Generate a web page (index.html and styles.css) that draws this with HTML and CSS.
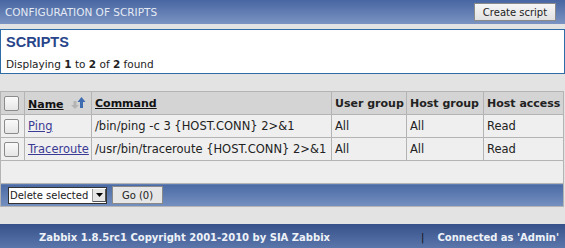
FILE: index.html
```html
<!DOCTYPE html>
<html lang="en">
<head>
  <meta charset="UTF-8">
  <title>Configuration of scripts</title>
  <link rel="stylesheet" href="styles.css">
</head>
<body>
  <!-- Page title bar -->
  <div class="page-header">
    <span class="page-title">CONFIGURATION OF SCRIPTS</span>
    <button class="btn create-btn">Create script</button>
  </div>

  <!-- Scripts summary box -->
  <div class="summary-box">
    <h2>SCRIPTS</h2>
    <p>Displaying <b>1</b> to <b>2</b> of <b>2</b> found</p>
  </div>

  <!-- Scripts list -->
  <table class="list-table">
    <colgroup>
      <col class="w-check">
      <col class="w-name">
      <col class="w-command">
      <col class="w-usergroup">
      <col class="w-hostgroup">
      <col>
    </colgroup>
    <thead>
      <tr>
        <th class="col-check"><span class="checkbox"></span></th>
        <th>
          <a class="sort-link" href="#">Name</a>
          <svg class="sort-icon" width="17" height="13" viewBox="0 0 17 13">
            <path d="M3.5 5h3v4h2.5L5 13 1 9h2.5z" fill="#b4b4b4"/>
            <path d="M10 12h3V6h2.5L11.5 1 7.5 6H10z" fill="#3f6bb0"/>
          </svg>
        </th>
        <th><a class="sort-link" href="#">Command</a></th>
        <th>User group</th>
        <th>Host group</th>
        <th>Host access</th>
      </tr>
    </thead>
    <tbody>
      <tr>
        <td class="col-check"><span class="checkbox"></span></td>
        <td><a href="#">Ping</a></td>
        <td>/bin/ping -c 3 {HOST.CONN} 2&gt;&amp;1</td>
        <td>All</td>
        <td>All</td>
        <td>Read</td>
      </tr>
      <tr>
        <td class="col-check"><span class="checkbox"></span></td>
        <td><a href="#">Traceroute</a></td>
        <td>/usr/bin/traceroute {HOST.CONN} 2&gt;&amp;1</td>
        <td>All</td>
        <td>All</td>
        <td>Read</td>
      </tr>
      <tr class="empty-row">
        <td colspan="6"></td>
      </tr>
    </tbody>
    <tfoot>
      <tr>
        <td colspan="6">
          <div class="actions">
            <div class="select-box">
              <span>Delete selected</span>
              <span class="select-arrow">
                <svg width="7" height="4" viewBox="0 0 7 4"><path d="M0 0h7L3.5 4z" fill="#000"/></svg>
              </span>
            </div>
            <button class="btn go-btn">Go (0)</button>
          </div>
        </td>
      </tr>
    </tfoot>
  </table>

  <!-- Page footer -->
  <div class="page-footer">
    <span class="copyright">Zabbix 1.8.5rc1 Copyright 2001-2010 by SIA Zabbix</span>
    <span class="divider">|</span>
    <span class="connected">Connected as 'Admin'</span>
  </div>
</body>
</html>
```

FILE: styles.css
```css
body {
  margin: 0;
  font-family: "DejaVu Sans", Verdana, sans-serif;
  font-size: 11.5px;
  color: #222;
  background-color: #e3e3e3;
}

.page-header {
  display: flex;
  justify-content: space-between;
  align-items: center;
  height: 24px;
  padding: 0 9px 0 5px;
  background: linear-gradient(to bottom, #4866a2, #7a93c2);
}

.page-title {
  color: #e4eaf4;
  font-size: 10.5px;
}

.btn {
  font-family: "DejaVu Sans", Verdana, sans-serif;
  font-size: 10px;
  color: #222;
  background: linear-gradient(to bottom, #f6f6f6, #e2e2e2);
  border: 1px solid #8a8a8a;
  padding: 0;
  height: 18px;
  white-space: nowrap;
}

.create-btn {
  width: 82px;
}

.summary-box {
  margin-top: 5px;
  height: 43px;
  background-color: #fff;
  border: 1px solid #2e6ca8;
  padding: 0 5px;
}

.summary-box h2 {
  margin: 4px 0 0;
  height: 18px;
  font-family: "Liberation Sans", Arial, sans-serif;
  font-size: 14.5px;
  color: #27458a;
}

.summary-box p {
  margin: 6px 0 0;
  font-size: 10.5px;
}

.list-table {
  margin-top: 17px;
  width: 564px;
  table-layout: fixed;
  border-collapse: collapse;
  border: 1px solid #aaa;
}

.w-check { width: 24px; }
.w-name { width: 67px; }
.w-command { width: 240px; }
.w-usergroup { width: 75px; }
.w-hostgroup { width: 77px; }

.list-table th,
.list-table td {
  border: 1px solid #b4b4b4;
  padding: 0 3px;
  height: 22px;
  text-align: left;
  white-space: nowrap;
  overflow: hidden;
}

.list-table th {
  background-color: #d4d4d4;
  font-size: 11px;
  font-weight: bold;
}

.list-table tbody td {
  background-color: #efefef;
}

.list-table td a {
  color: #3b3a94;
}

.sort-link {
  color: #111;
}

.sort-icon {
  vertical-align: -1px;
  margin-left: 3px;
}

.checkbox {
  display: block;
  width: 13px;
  height: 13px;
  border: 1px solid #8b8b8b;
  border-radius: 2px;
  background: linear-gradient(to bottom, #fafafa, #e6e6e6);
}

.list-table .empty-row td {
  background-color: #eeeeee;
}

.list-table tfoot td {
  padding: 0 7px;
  background: linear-gradient(to bottom, #4b6aa5, #7590c0);
}

.actions {
  display: flex;
  align-items: center;
  gap: 5px;
}

.select-box {
  display: flex;
  align-items: center;
  justify-content: space-between;
  width: 96px;
  height: 15px;
  padding-left: 1px;
  background-color: #fff;
  border: 1px solid #333;
  font-size: 10px;
}

.select-arrow {
  display: flex;
  align-items: center;
  justify-content: center;
  width: 13px;
  height: 13px;
  background: #e6e6e6;
  border-left: 1px solid #999;
  box-shadow: inset -1px -1px 0 #555;
}

.go-btn {
  width: 51px;
  height: 18px;
  background: #e6e6e6;
}

.page-footer {
  display: flex;
  align-items: center;
  margin-top: 17px;
  height: 26px;
  padding: 0 6px 0 39px;
  background: linear-gradient(to bottom, #37528a, #5e79ad);
  color: #eef2f8;
  font-size: 10px;
  font-weight: bold;
}

.copyright {
  flex: 1;
}

.divider {
  color: #111;
  font-weight: normal;
  margin-right: 13px;
}
```
